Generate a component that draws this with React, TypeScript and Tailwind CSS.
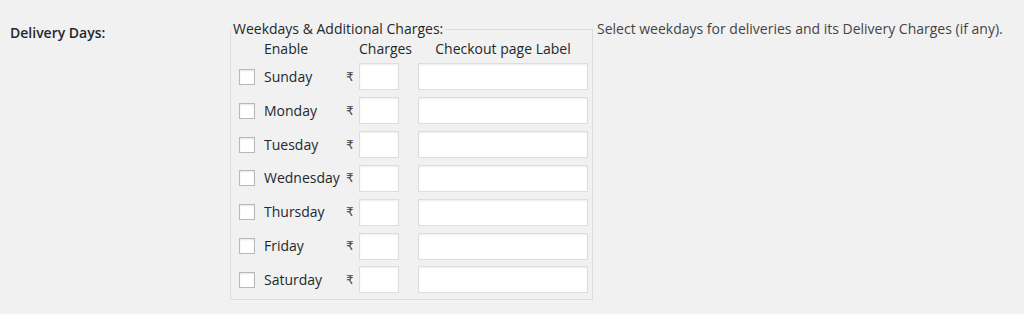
import React from "react";

const days = ["Sunday", "Monday", "Tuesday", "Wednesday", "Thursday", "Friday", "Saturday"];

export default function App() {
  return (
    <div
      className="h-[314px] w-[1024px] bg-[#f1f1f1] text-[#23282d] flex items-start"
      style={{ fontFamily: '"Open Sans", "Noto Sans", "DejaVu Sans", sans-serif' }}
    >
      <div className="w-[230px] shrink-0 pl-[10px] pt-[23px] text-[14px] leading-[20px] font-semibold">
        Delivery Days:
      </div>
      <fieldset className="mt-[19px] w-[363px] min-w-0 shrink-0 border border-[#dcdcdc] pb-[2px]">
        <legend className="px-[2px] text-[14px] leading-[20px] text-[#23282d]">
          Weekdays &amp; Additional Charges:
        </legend>
        <div className="flex h-[20px] items-center text-[14px] leading-[20px] text-[#23282d]">
          <div className="w-[33px] shrink-0" />
          <div className="w-[95px] shrink-0">Enable</div>
          <div className="w-[59px] shrink-0 whitespace-nowrap">Charges</div>
          <div className="w-[170px] shrink-0 whitespace-nowrap text-center">Checkout page Label</div>
        </div>
        <div className="mt-[1px] flex flex-col">
          {days.map((d) => (
            <div key={d} className="flex h-[33.83px] items-center pl-[8px] pr-[4px]">
              <span className="h-4 w-4 shrink-0 border border-[#b4b9be] bg-white shadow-[inset_0_1px_2px_rgba(0,0,0,0.1)]" />
              <span className="ml-[9px] w-[82px] shrink-0 whitespace-nowrap text-[14px] leading-[20px] text-[#23282d]">
                {d}
              </span>
              <span
                className="w-[13px] shrink-0 text-[12px] leading-[16px] text-[#444]"
                style={{ fontFamily: '"DejaVu Sans", sans-serif' }}
              >
                ₹
              </span>
              <span className="h-[27px] w-[40px] shrink-0 border border-[#ddd] bg-white shadow-[inset_0_1px_2px_rgba(0,0,0,0.07)]" />
              <span className="ml-[19px] h-[27px] w-[170px] shrink-0 border border-[#ddd] bg-white shadow-[inset_0_1px_2px_rgba(0,0,0,0.07)]" />
            </div>
          ))}
        </div>
      </fieldset>
      <div className="ml-[4px] pt-[19px] text-[14px] leading-[20px] text-[#444] whitespace-nowrap">
        Select weekdays for deliveries and its Delivery Charges (if any).
      </div>
    </div>
  );
}
